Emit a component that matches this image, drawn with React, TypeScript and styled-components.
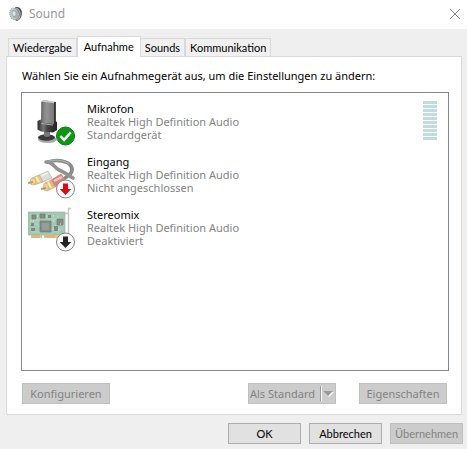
import React, { useState } from "react";
import styled, { createGlobalStyle } from "styled-components";

const GlobalStyle = createGlobalStyle`
  *, *::before, *::after { box-sizing: border-box; }
  body {
    margin: 0;
    background: #efefef;
    color: #000;
    font: 11px/13px "Noto Sans", "Open Sans", sans-serif;
  }
  button { font: inherit; color: inherit; margin: 0; }
`;

const Dialog = styled.main`
  display: flex;
  flex-direction: column;
  min-height: 100vh;
  background: #efefef;
`;

const TitleBar = styled.header`
  display: flex;
  align-items: center;
  height: 29px;
  padding: 0 6px 2px 9px;
  background: #fff;
`;

const Title = styled.h1`
  flex: 1;
  margin: 0 0 0 6px;
  font-size: 12px;
  line-height: 16px;
  font-weight: 400;
  color: #999;
`;

const CloseButton = styled.button`
  display: grid;
  place-items: center;
  width: 12px;
  height: 12px;
  padding: 0;
  border: 0;
  background: none;
`;

const TabList = styled.div`
  display: flex;
  align-items: flex-end;
  height: 27px;
  padding: 0 8px;
`;

const Tab = styled.button<{ $active: boolean }>`
  height: ${(p) => (p.$active ? 21 : 18)}px;
  margin: ${(p) => (p.$active ? "0 -1px -1px 0" : "0")};
  padding: ${(p) => (p.$active ? "0 6px 2px" : "0 4px")};
  border: 1px solid #d9d9d9;
  border-bottom: 0;
  background: ${(p) => (p.$active ? "#fff" : "#f0f0f0")};
  font-family: Lato, sans-serif;
  position: relative;
  z-index: ${(p) => (p.$active ? 1 : 0)};
  white-space: nowrap;

  & + & { border-left-width: ${(p) => (p.$active ? 1 : 0)}px; }
`;

const Panel = styled.section`
  display: flex;
  flex-direction: column;
  flex: 1;
  margin: 0 5px 0 6px;
  padding: 12px 12px 10px 14px;
  border: 1px solid #d9d9d9;
  background: #fff;
`;

const Prompt = styled.p`
  margin: 0 0 10px 1px;
`;

const DeviceList = styled.ul`
  flex: 1;
  margin: 0;
  padding: 9px 11px 0 6px;
  border: 1px solid #828790;
  list-style: none;
`;

const Device = styled.li`
  display: flex;
  align-items: flex-start;
  height: 53px;
`;

const DeviceIcon = styled.svg`
  flex: none;
  width: 48px;
  height: 48px;
  margin-top: -4px;
`;

const DeviceText = styled.div`
  flex: 1;
  margin-left: 11px;
`;

const DeviceName = styled.div`
  color: #000;
`;

const DeviceDetail = styled.div`
  color: #838383;
`;

const Meter = styled.div`
  display: grid;
  gap: 1px;
  width: 14px;
  margin-top: -1px;
`;

const MeterBar = styled.span`
  height: 3px;
  background: #c0dce2;
`;

const Actions = styled.div`
  display: flex;
  align-items: center;
  margin: 12px 2px 0 1px;
`;

const PushButton = styled.button<{ $width: number; $narrow?: boolean }>`
  display: flex;
  align-items: center;
  justify-content: center;
  width: ${(p) => p.$width}px;
  height: 21px;
  padding: 0;
  border: 1px solid #adadad;
  background: #e1e1e1;
  font-family: ${(p) => (p.$narrow ? "Lato, sans-serif" : "inherit")};
  white-space: nowrap;

  &:disabled {
    border-color: #bfbfbf;
    background: #ccc;
    color: #838383;
  }
`;

const Spacer = styled.span`
  flex: 1;
`;

const Gap = styled.span`
  width: 23px;
`;

const SplitArrow = styled.svg`
  width: 15px;
  height: 17px;
  margin-left: 4px;
`;

const Footer = styled.footer`
  display: flex;
  justify-content: flex-end;
  gap: 8px;
  padding: 8px 4px 5px;
`;

const SpeakerIcon = () => (
  <svg width="14" height="16" viewBox="0 0 14 16" aria-hidden="true">
    <path d="M6 1.5C9 0 12 2 12.8 5.5C13.4 10 11 14 8 15L5 13Z" fill="#4d4d4d" />
    <path d="M6 2c3 0 5 3 5 6s-1 5-3 6" fill="none" stroke="#b5b5b5" strokeWidth="1.2" />
    <ellipse cx="5.3" cy="8" rx="4.6" ry="6" fill="#c3c8ca" stroke="#929292" strokeDasharray="1 1" transform="rotate(-12 5.3 8)" />
    <ellipse cx="5.8" cy="8" rx="3" ry="4.4" fill="#a3afb5" transform="rotate(-12 5.8 8)" />
    <ellipse cx="5" cy="7.6" rx="1.5" ry="2.4" fill="#dce4e8" />
  </svg>
);

const Check = () => (
  <g>
    <circle cx="37.5" cy="38" r="9.6" fill="#fff" />
    <circle cx="37.5" cy="38" r="9" fill="#109516" stroke="#087c10" />
    <path d="m32.4 38 3.7 3.8 6.6-7.3" fill="none" stroke="#fff" strokeWidth="2.5" />
  </g>
);

const DownBadge = ({ color }: { color: string }) => (
  <g>
    <circle cx="37.5" cy="38" r="9" fill="#f9f9f9" stroke="#858585" />
    <path d="M35 32.5h5V38h3.3l-5.8 6-5.8-6H35Z" fill={color} />
  </g>
);

const Microphone = () => (
  <DeviceIcon viewBox="0 0 48 48" aria-hidden="true">
    <defs>
      <linearGradient id="mic-body" x2="1">
        <stop stopColor="#777" />
        <stop offset=".4" stopColor="#929292" />
        <stop offset="1" stopColor="#737373" />
      </linearGradient>
      <linearGradient id="mic-collar" x2="1">
        <stop stopColor="#292929" />
        <stop offset=".3" stopColor="#777" />
        <stop offset=".5" stopColor="#444" />
        <stop offset="1" stopColor="#222" />
      </linearGradient>
    </defs>
    <ellipse cx="19.5" cy="41.5" rx="9.5" ry="3.5" fill="#aaa" />
    <ellipse cx="18.5" cy="39.5" rx="8.5" ry="3.2" fill="#3b3b3b" />
    <path d="M16 32h6v6q-3 2-6 0Z" fill="#777" />
    <path d="m13.5 3.5 2-1.5L27 4v23l-13 1Z" fill="url(#mic-body)" />
    <path d="m14 4-.5 23" stroke="#555" />
    <path d="m13.5 3.5 2-1.8L28 4l-2 1.2Z" fill="#c9c9c9" />
    <path d="M27 4v24" stroke="#303030" strokeWidth="1.8" />
    <path d="m9.5 23 3-1.5 1.5 3.5 12 1 1-3 2 1v8l-4 2.5-12-1-3.5-2Z" fill="url(#mic-collar)" />
    <path d="m13 25.5 12 1.5" stroke="#aaa" />
    <Check />
  </DeviceIcon>
);

const AudioCable = () => (
  <DeviceIcon viewBox="0 0 48 48" aria-hidden="true">
    <g fill="none" strokeLinecap="round">
      <path d="M20 11C29 8 40 10 43 15S43 23 37 27" stroke="#8b8b8b" strokeWidth="3.6" />
      <path d="M18 11C26 11 26 17 31 19S40 24 45 27" stroke="#929292" strokeWidth="3.6" />
      <path d="M21 10C30 8 38 10 41 13" stroke="#b4b4b4" />
    </g>
    <path d="m11 24 9-4 4 7-9 4Z" fill="#dcdcdc" stroke="#aaa" strokeWidth=".6" />
    <path d="m23 29 10-6 5 7-11 6Z" fill="#d98680" stroke="#c37b73" strokeWidth=".6" />
    <path d="m13 25 7-3m6 8 8-4" stroke="#fff" strokeOpacity=".55" strokeWidth="2" />
    <g stroke="#c5a877" strokeWidth=".7">
      <path d="m4 27 7-3 4 7-9 3Z" fill="#e6ca87" />
      <path d="m17 32 6-3 4 7-8 4Z" fill="#dfbd77" />
      <ellipse cx="5" cy="30.5" rx="2.8" ry="3.6" fill="#efd69a" />
      <ellipse cx="18" cy="36" rx="2.8" ry="3.8" fill="#ebd094" />
      <path d="m8 26 3 5m9 0 3 6" fill="none" stroke="#fff0bb" strokeWidth="2" />
    </g>
    <path d="m0 32 5-1m8 7 5-1" stroke="#b59b70" strokeWidth="2" />
    <DownBadge color="#da0c12" />
  </DeviceIcon>
);

const SoundCard = () => (
  <DeviceIcon viewBox="0 0 48 48" aria-hidden="true">
    <path d="M43 4.5h-2.5V32M37 9.5h3.5" fill="none" stroke="#c4c4c4" strokeWidth="1.4" />
    <path d="M0 8h37v23H0Z" fill="#a4c8b2" stroke="#94af9e" strokeWidth=".6" />
    <path d="M3 31h11v3H3Zm13 0h16v3H16Z" fill="#e3c287" />
    <path d="M5 31v3m2-3v3m2-3v3m2-3v3m7-3v3m2-3v3m2-3v3m2-3v3m2-3v3" stroke="#bd9e6d" strokeWidth=".6" />
    <path d="M2 16h8l3 3h9l3-4h10M2 20h7l5 5h10l4-4h8M3 28h14l2-3h16M9 11v6m12-6v8m9-8v18" fill="none" stroke="#c6dccd" strokeWidth=".6" />
    <path d="M12 17h11v11H12Zm17-2h6v6h-6ZM4 11h4v4H4Zm8-1h5v4h-5Z" fill="#848e88" stroke="#6e7a72" strokeWidth=".7" />
    <path d="M14 19h7v7h-7Z" fill="#989d99" />
    <path d="M20 11h3v3h-3ZM3 19h3v3H3Zm0 5h4v3H3Zm23-2h4v5h-4Z" fill="#778c7d" />
    <path d="M2 17h1m2 0h1m3-5h1m8 0h1m6 0h1m-1 5h1m6 3h1m-3 6h1" stroke="#e7f0ea" />
    <DownBadge color="#252525" />
  </DeviceIcon>
);

const devices = [
  { name: "Mikrofon", driver: "Realtek High Definition Audio", status: "Standardgerät", Icon: Microphone, meter: true },
  { name: "Eingang", driver: "Realtek High Definition Audio", status: "Nicht angeschlossen", Icon: AudioCable, meter: false },
  { name: "Stereomix", driver: "Realtek High Definition Audio", status: "Deaktiviert", Icon: SoundCard, meter: false },
];

const tabs = ["Wiedergabe", "Aufnahme", "Sounds", "Kommunikation"];

export default function App() {
  const [active, setActive] = useState("Aufnahme");
  return (
    <>
      <GlobalStyle />
      <Dialog>
        <TitleBar>
          <SpeakerIcon />
          <Title>Sound</Title>
          <CloseButton aria-label="Schließen">
            <svg width="12" height="12" viewBox="0 0 12 12" aria-hidden="true">
              <path d="m1 1 10 10M11 1 1 11" stroke="#888" />
            </svg>
          </CloseButton>
        </TitleBar>
        <TabList role="tablist">
          {tabs.map((tab) => (
            <Tab key={tab} role="tab" aria-selected={tab === active} $active={tab === active} onClick={() => setActive(tab)}>
              {tab}
            </Tab>
          ))}
        </TabList>
        <Panel role="tabpanel" aria-label={active}>
          <Prompt>Wählen Sie ein Aufnahmegerät aus, um die Einstellungen zu ändern:</Prompt>
          <DeviceList>
            {devices.map(({ name, driver, status, Icon, meter }) => (
              <Device key={name}>
                <Icon />
                <DeviceText>
                  <DeviceName>{name}</DeviceName>
                  <DeviceDetail>{driver}</DeviceDetail>
                  <DeviceDetail>{status}</DeviceDetail>
                </DeviceText>
                {meter && (
                  <Meter role="img" aria-label="Pegel">
                    {Array.from({ length: 10 }, (_, i) => <MeterBar key={i} />)}
                  </Meter>
                )}
              </Device>
            ))}
          </DeviceList>
          <Actions>
            <PushButton $width={88} disabled>Konfigurieren</PushButton>
            <Spacer />
            <PushButton $width={88} disabled>
              Als Standard
              <SplitArrow viewBox="0 0 15 17" aria-hidden="true">
                <path d="M1.5 1v15" stroke="#999" />
                <path d="M2.5 1v15" stroke="#fff" />
                <path d="M5 7h10l-5 5Z" fill="#fff" />
                <path d="M4 6h10l-5 5Z" fill="#999" />
              </SplitArrow>
            </PushButton>
            <Gap />
            <PushButton $width={88} disabled>Eigenschaften</PushButton>
          </Actions>
        </Panel>
        <Footer>
          <PushButton $width={73} $narrow>OK</PushButton>
          <PushButton $width={73} $narrow>Abbrechen</PushButton>
          <PushButton $width={73} $narrow disabled>Übernehmen</PushButton>
        </Footer>
      </Dialog>
    </>
  );
}
